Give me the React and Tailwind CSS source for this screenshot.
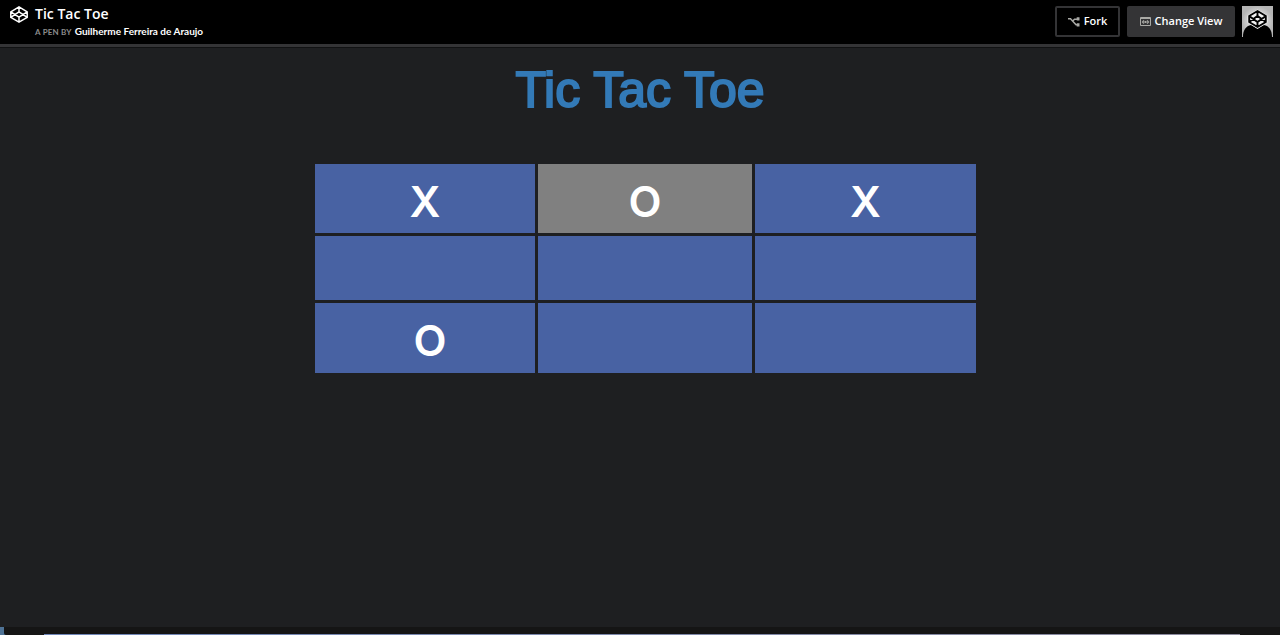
import React, { useState } from "react";

function PenLogo() {
  return (
    <svg viewBox="0 0 18 17" className="h-[17px] w-[18px]" fill="none" stroke="#fff" strokeWidth="1.500" strokeLinejoin="round" aria-hidden="true">
      <path d="M9 .8 17.200 5.800v5.600L9 16.200.800 11.400V5.800ZM9 .8v5M9 11.200v5M.8 5.800 9 11.200l8.200-5.400M.8 11.400 9 5.800l8.200 5.600" />
    </svg>
  );
}

function ForkIcon() {
  return (
    <svg viewBox="0 0 12 10" className="h-[10px] w-3" fill="none" stroke="#aaaaa6" strokeWidth="1.500" aria-hidden="true">
      <path d="M0 1.700h2.500L8 7.800h2M4.500 4.200 6.500 2.200H10" />
      <path d="M8.700.3h2.800v3.200H8.700zM8.700 6.300h2.800v3.200H8.700z" fill="#aaaaa6" stroke="none" />
    </svg>
  );
}

function ViewIcon() {
  return (
    <svg viewBox="0 0 11 9" className="h-[9px] w-[11px]" fill="none" stroke="#aaaaa6" aria-hidden="true">
      <path d="M.5.5h10v8H.5zM0 1.500h11" />
      <path d="M4 3.500 2.500 5 4 6.500M7 3.500 8.500 5 7 6.500" strokeWidth="1.200" />
      <path d="M4.500 4h2v2h-2z" fill="#aaaaa6" stroke="none" />
    </svg>
  );
}

function Avatar() {
  return (
    <svg viewBox="0 0 31 31" className="h-[31px] w-[31px]" role="img" aria-label="Profile">
      <defs>
        <radialGradient id="glow">
          <stop offset="0" stopColor="#fff" />
          <stop offset="1" stopColor="#b4b4b4" />
        </radialGradient>
      </defs>
      <path d="M0 0h31v31H0z" fill="url(#glow)" />
      <path d="M1 31C1 24 4 20 9 19l6.500 3.500L22 19c5 1 8 5 8 12Z" fill="#000" />
      <path d="M15.500 3.500 25.500 9.500v7l-10 6.500-10-6.500v-7Z" fill="#f2f2f2" />
      <path d="M15.500 5 23.800 10v6l-8.300 5-8.300-5v-6ZM15.500 5v5M15.500 16v5M7.200 10l8.300 6 8.300-6M7.200 16l8.300-6 8.300 6" fill="none" stroke="#000" strokeWidth="1.900" />
    </svg>
  );
}

const start = ["X", "O", "X", "", "", "", "O", "", ""];

export default function App() {
  const [cells, setCells] = useState(start);
  const play = (i) => {
    if (cells[i]) return;
    const next = cells.filter(Boolean).length % 2 ? "O" : "X";
    setCells(cells.map((c, n) => (n === i ? next : c)));
  };

  return (
    <div className="flex min-h-screen flex-col bg-[#1e1f21] font-['Lato',sans-serif] text-white">
      <header className="flex h-12 items-start justify-between border-b border-[#101112] bg-black pr-[7px] pl-[10px] shadow-[inset_0_-3px_0_#343436]">
        <div className="flex gap-[7px] pt-[6px]">
          <a href="#" aria-label="Home" className="h-[17px]"><PenLogo /></a>
          <div>
            <h1 className="font-['Open_Sans',sans-serif] text-sm leading-4 font-semibold">Tic Tac Toe</h1>
            <p className="flex items-baseline gap-[3px] pt-px leading-4">
              <span className="text-[8px] font-bold tracking-wide text-[#8c8c8c]">A PEN BY</span>
              <a href="#" className="text-[10px] font-bold">Guilherme Ferreira de Araujo</a>
            </p>
          </div>
        </div>
        <div className="flex gap-[7px] pt-[6px] font-['Open_Sans',sans-serif] text-[11px] font-semibold">
          <button className="flex h-[31px] w-[65px] items-center justify-center gap-1 rounded-xs border-2 border-[#343436]">
            <ForkIcon />Fork
          </button>
          <button className="flex h-[31px] w-[108px] items-center justify-center gap-1 rounded-xs bg-[#343436]">
            <ViewIcon />Change View
          </button>
          <a href="#"><Avatar /></a>
        </div>
      </header>

      <main className="flex grow flex-col items-center pt-3">
        <h2 className="font-['Liberation_Sans',sans-serif] text-[50px] leading-[60px] text-[#337ab7] [-webkit-text-stroke:2px_#337ab7]">Tic Tac Toe</h2>
        <div className="mt-11 w-full max-w-[672px] pl-[11px]">
          <div className="grid grid-cols-[220fr_214fr_221fr] grid-rows-[69px_64px_70px] gap-[3px] font-['Inter',sans-serif] text-[43px] leading-none font-semibold">
            {cells.map((mark, i) => (
              <button
                key={i}
                onClick={() => play(i)}
                aria-label={`Square ${i + 1}${mark ? `, ${mark}` : ""}`}
                className={`flex items-center justify-center pt-[5px] ${i === 6 ? "pl-[10px]" : ""} ${i === 1 ? "bg-[#808080]" : "bg-[#4862a3]"}`}
              >
                {mark}
              </button>
            ))}
          </div>
        </div>
      </main>

      <footer className="flex h-2 bg-[#4f7396] pl-1">
        <div className="flex grow items-end rounded-bl-xs bg-[#151515] px-10">
          <div className="h-px grow bg-linear-to-r from-[#6f86b8] to-[#8c8a9c]" />
        </div>
      </footer>
    </div>
  );
}
